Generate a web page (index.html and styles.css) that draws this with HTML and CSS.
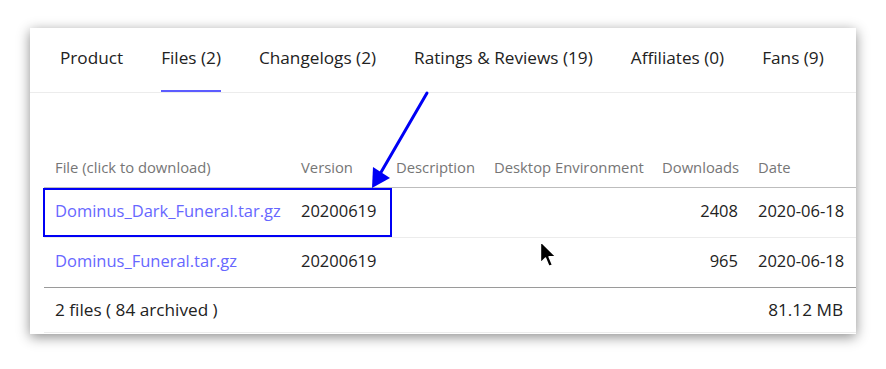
FILE: index.html
```html
<!DOCTYPE html>
<html lang="en">
<head>
    <meta charset="UTF-8">
    <title>Files</title>
    <link rel="stylesheet" href="styles.css">
</head>
<body>
    <div class="window">
        <nav class="tabs">
            <a class="tab">Product</a>
            <a class="tab active">Files (2)</a>
            <a class="tab">Changelogs (2)</a>
            <a class="tab">Ratings &amp; Reviews (19)</a>
            <a class="tab">Affiliates (0)</a>
            <a class="tab">Fans (9)</a>
        </nav>

        <div class="files">
            <table class="files-table">
                <colgroup>
                    <col style="width: 246px">
                    <col style="width: 95px">
                    <col style="width: 98px">
                    <col style="width: 168px">
                    <col style="width: 96px">
                    <col style="width: 109px">
                </colgroup>
                <thead>
                    <tr>
                        <th>File (click to download)</th>
                        <th>Version</th>
                        <th>Description</th>
                        <th>Desktop Environment</th>
                        <th class="num">Downloads</th>
                        <th>Date</th>
                    </tr>
                </thead>
                <tbody>
                    <tr>
                        <td><a class="file-link">Dominus_Dark_Funeral.tar.gz</a></td>
                        <td>20200619</td>
                        <td></td>
                        <td></td>
                        <td class="num">2408</td>
                        <td>2020-06-18</td>
                    </tr>
                    <tr class="last">
                        <td><a class="file-link">Dominus_Funeral.tar.gz</a></td>
                        <td>20200619</td>
                        <td></td>
                        <td></td>
                        <td class="num">965</td>
                        <td>2020-06-18</td>
                    </tr>
                </tbody>
                <tfoot>
                    <tr>
                        <td colspan="5">2 files ( 84 archived )</td>
                        <td class="num">81.12 MB</td>
                    </tr>
                </tfoot>
            </table>
        </div>

        <div class="highlight"></div>
    </div>

    <svg class="annotation" width="886" height="369" viewBox="0 0 886 369">
        <line x1="427" y1="93" x2="380" y2="174" stroke="#0000f5" stroke-width="3" stroke-linecap="round"/>
        <polygon points="372,188 373,167 390,178" fill="#0000f5"/>
    </svg>

    <svg class="cursor" width="20" height="30" viewBox="0 0 20 30">
        <path d="M1.5 1.5 L1.5 23 L6.5 18 L10 26.5 L13.5 25 L10 16.8 L17 16.8 Z" fill="#000" stroke="#fff" stroke-width="1.4" stroke-linejoin="round"/>
    </svg>
</body>
</html>
```

FILE: styles.css
```css
body {
    margin: 0;
    padding: 28px 30px;
    background-color: #ffffff;
    font-family: 'Open Sans', 'Noto Sans', sans-serif;
    color: #222222;
    position: relative;
}

.window {
    position: relative;
    width: 826px;
    background-color: #ffffff;
    box-shadow: 0 3px 12px rgba(0, 0, 0, 0.45);
    padding-bottom: 1px;
}

.tabs {
    display: flex;
    padding-left: 11px;
    border-bottom: 1px solid #ececec;
}

.tab {
    margin: 0 19px;
    padding: 18px 0 20px;
    font-size: 17.2px;
    line-height: 24px;
    color: #222222;
    border-bottom: 2px solid transparent;
}

.tab.active {
    border-bottom-color: #5c5cff;
}

.files {
    padding: 55px 0 0 14px;
}

.files-table {
    border-collapse: collapse;
    table-layout: fixed;
    width: 812px;
}

.files-table th,
.files-table td {
    padding: 0 9px 0 11px;
    text-align: left;
    white-space: nowrap;
}

.files-table th:last-child,
.files-table td:last-child {
    padding-right: 13px;
}

.files-table th {
    padding-top: 9px;
    padding-bottom: 10px;
    font-size: 14.8px;
    line-height: 20px;
    font-weight: normal;
    color: #767676;
    border-bottom: 1px solid #bdbdbd;
}

.files-table tbody td {
    padding-top: 12px;
    padding-bottom: 15px;
    font-size: 16.5px;
    line-height: 22px;
    border-bottom: 1px solid #ececec;
}

.files-table tbody tr.last td {
    border-bottom: 1px solid #9a9a9a;
}

.files-table tfoot td {
    padding-top: 10px;
    padding-bottom: 10px;
    font-size: 17.2px;
    line-height: 24px;
    border-bottom: 1px solid #ececec;
}

.files-table .num {
    text-align: right;
}

.file-link {
    color: #6767ff;
    text-decoration: none;
}

.highlight {
    position: absolute;
    left: 13px;
    top: 160px;
    width: 345px;
    height: 45px;
    border: 2px solid #0000f5;
}

.annotation {
    position: absolute;
    left: 0;
    top: 0;
}

.cursor {
    position: absolute;
    left: 539px;
    top: 240px;
}
```
